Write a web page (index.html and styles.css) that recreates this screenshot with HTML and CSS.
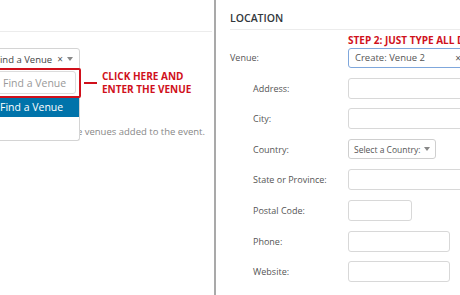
FILE: index.html
```html
<!DOCTYPE html>
<html lang="en">
<head>
    <meta charset="UTF-8">
    <meta name="viewport" content="width=device-width, initial-scale=1.0">
    <title>Event Venue</title>
    <link rel="stylesheet" href="styles.css">
</head>
<body>

<div class="screen">
    <div class="venue-panel">
        <div class="panel-top"></div>

        <div class="venue-field">
            <div class="venue-select">
                <span class="select-text">Find a Venue</span>
                <span class="select-clear">&times;</span>
                <span class="select-arrow"></span>
            </div>

            <div class="venue-dropdown">
                <div class="search-row">
                    <input type="text" class="search-input" placeholder="Find a Venue">
                </div>
                <div class="option active">Find a Venue</div>
            </div>

            <div class="callout-box"></div>
            <div class="callout-line"></div>
            <div class="callout-text">CLICK HERE AND<br>ENTER THE VENUE</div>
        </div>

        <p class="venue-note">Choose from the venues added to the event.</p>
    </div>

    <div class="location-panel">
        <h2 class="section-title">LOCATION</h2>
        <div class="step-note">STEP 2: JUST TYPE ALL DETAILS OF THE VENUE</div>

        <div class="form-grid">
            <label class="main-label">Venue:</label>
            <div class="field venue-input">
                <span>Create: Venue 2</span>
                <span class="input-clear">&times;</span>
            </div>

            <label>Address:</label>
            <input type="text" class="field">

            <label>City:</label>
            <input type="text" class="field">

            <label>Country:</label>
            <div class="field country-select">
                <span>Select a Country:</span>
                <span class="select-arrow"></span>
            </div>

            <label>State or Province:</label>
            <input type="text" class="field">

            <label>Postal Code:</label>
            <input type="text" class="field short">

            <label>Phone:</label>
            <input type="text" class="field medium">

            <label>Website:</label>
            <input type="text" class="field medium">
        </div>
    </div>
</div>

</body>
</html>
```

FILE: styles.css
```css
body {
    margin: 0;
    font-family: "Open Sans", "Noto Sans", sans-serif;
    font-size: 9px;
    color: #555;
    background: #fff;
    overflow: hidden;
}
.screen {
    display: flex;
    width: 460px;
    height: 295px;
    overflow: hidden;
}

/* left side: venue picker */
.venue-panel {
    width: 214px;
    flex-shrink: 0;
    border-right: 2px solid #a9a9a9;
}
.panel-top {
    height: 31px;
    margin-right: 2px;
    border-bottom: 1px solid #ececec;
}
.venue-field {
    position: relative;
    margin: 16px 0 0 -12px;
    width: 92px;
}
.venue-select {
    display: flex;
    align-items: center;
    height: 20px;
    padding: 0 6px 0 6px;
    border: 1px solid #d4d4d4;
    border-radius: 3px 3px 0 0;
    color: #444;
    font-size: 9.5px;
}
.select-text { flex: 1; }
.select-clear {
    font-size: 10px;
    margin-right: 4px;
    color: #555;
}
.select-arrow {
    width: 0;
    height: 0;
    border-left: 3px solid transparent;
    border-right: 3px solid transparent;
    border-top: 4px solid #888;
}
.venue-dropdown {
    position: absolute;
    top: 22px;
    left: 0;
    right: 0;
    height: 70px;
    background: #fff;
    border: 1px solid #d4d4d4;
    border-top: none;
    border-radius: 0 0 3px 0;
    z-index: 2;
}
.search-row { padding: 1px 3px 3px 3px; }
.search-input {
    box-sizing: border-box;
    width: 100%;
    height: 23px;
    padding: 0 0 0 10px;
    border: 1px solid #dcdcdc;
    border-radius: 3px;
    font: inherit;
    font-size: 10.5px;
}
.search-input::placeholder { color: #999; }
.option {
    height: 20px;
    line-height: 20px;
    padding-left: 11px;
    font-size: 10.5px;
}
.option.active {
    background: #0073aa;
    color: #fff;
}
.callout-box {
    position: absolute;
    top: 20px;
    left: -4px;
    width: 93px;
    height: 26px;
    border: 2px solid #d0101b;
    border-radius: 2px;
    z-index: 3;
}
.callout-line {
    position: absolute;
    top: 34px;
    left: 96px;
    width: 13px;
    height: 2px;
    background: #d0101b;
}
.callout-text {
    position: absolute;
    top: 22px;
    left: 114px;
    width: 110px;
    font-size: 10px;
    font-weight: bold;
    line-height: 13px;
    color: #d0101b;
}
.venue-note {
    margin: 55px 9px 0 0;
    text-align: right;
    white-space: nowrap;
    color: #888;
    font-size: 9.5px;
}

/* right side: location form */
.location-panel {
    flex: 1;
    padding-left: 14px;
    white-space: nowrap;
}
.section-title {
    margin: 0;
    padding-top: 11px;
    height: 18px;
    font-size: 10.5px;
    font-weight: 600;
    color: #32373c;
    border-bottom: 1px solid #ececec;
}
.step-note {
    margin: 3px 0 0 118px;
    height: 14px;
    font-size: 10px;
    font-weight: bold;
    color: #d0101b;
}
.form-grid {
    display: grid;
    grid-template-columns: 95px 300px;
    grid-auto-rows: 21px;
    row-gap: 9.6px;
    align-items: center;
    margin-left: 23px;
}
.form-grid label { color: #555; }
.form-grid .main-label { margin-left: -23px; }
.field {
    box-sizing: border-box;
    height: 21px;
    width: 300px;
    border: 1px solid #d8d8d8;
    border-radius: 3px;
    background: #fff;
    font: inherit;
}
.venue-input {
    display: flex;
    align-items: center;
    height: 20px;
    padding: 0 6px;
    border-color: #7fa7dc;
    color: #555;
    width: 120px;
    font-size: 9.5px;
}
.venue-input span:first-child { flex: 1; }
.input-clear { font-size: 10px; }
.country-select {
    display: flex;
    align-items: center;
    gap: 4px;
    width: 88px;
    height: 20px;
    padding: 0 5px;
    border-color: #cfcfcf;
    color: #555;
    font-size: 8.5px;
}
.field.short { width: 64px; }
.field.medium { width: 102px; }
```
